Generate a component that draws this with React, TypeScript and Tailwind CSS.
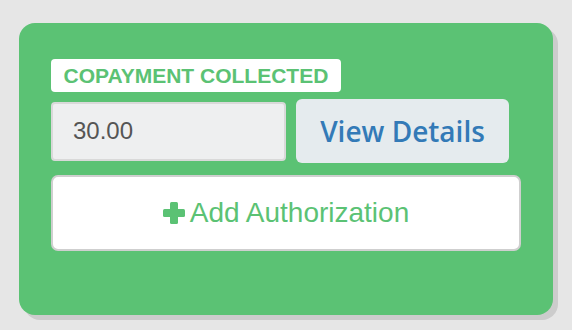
export default function App() {
  return (
    <div className="w-[572px] h-[330px] bg-[#e6e6e6] pt-[23px] pl-[19px] font-['Liberation_Sans',Arial,sans-serif]">
      <div className="w-[534px] h-[292px] rounded-[16px] bg-[#5bc274] shadow-[5px_5px_0_0_#cccccc] pt-[36px] pl-[32px]">
        <div className="inline-flex h-[33px] items-center rounded-[4px] bg-white px-[12.5px] text-[21px] font-bold text-[#5bc274] leading-none">
          COPAYMENT COLLECTED
        </div>
        <div className="mt-[7px] flex items-center gap-[10px]">
          <div className="flex h-[59px] w-[235px] items-center rounded-[4px] border-2 border-[#d9d9d9] bg-[#eeeff0] pl-[20px] text-[24px] text-[#555555]">
            30.00
          </div>
          <button className="h-[64px] w-[213px] rounded-[6px] bg-[#e5ebee] text-[28px] font-semibold text-[#337ab7] font-['Open_Sans',sans-serif]">
            View Details
          </button>
        </div>
        <button className="mt-[12px] flex h-[76px] w-[470px] items-center justify-center gap-[5px] rounded-[7px] border-2 border-[#cfcfcf] bg-white text-[28px] text-[#5bc274]">
          <svg width="22" height="22" viewBox="0 0 22 22">
            <rect x="7" y="0" width="8" height="22" rx="1.5" fill="#5bc274" />
            <rect x="0" y="7" width="22" height="8" rx="1.5" fill="#5bc274" />
          </svg>
          Add Authorization
        </button>
      </div>
    </div>
  );
}
